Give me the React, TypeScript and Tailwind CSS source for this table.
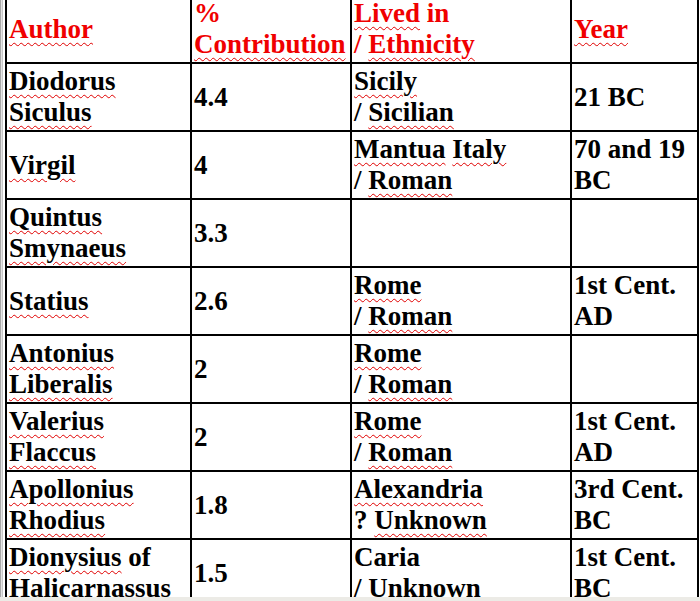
const header = [
  ["~Author~"],
  ["%", "~Contribution~"],
  ["~Lived~ in", "/ ~Ethnicity~"],
  ["~Year~"],
];

const rows = [
  [["~Diodorus~", "~Siculus~"], ["4.4"], ["~Sicily~", "/ ~Sicilian~"], ["21 BC"]],
  [["~Virgil~"], ["4"], ["~Mantua~ ~Italy~", "/ ~Roman~"], ["70 and 19", "BC"]],
  [["~Quintus~", "~Smynaeus~"], ["3.3"], [], []],
  [["~Statius~"], ["2.6"], ["~Rome~", "/ ~Roman~"], ["1st Cent.", "AD"]],
  [["~Antonius~", "~Liberalis~"], ["2"], ["~Rome~", "/ ~Roman~"], []],
  [["~Valerius~", "~Flaccus~"], ["2"], ["~Rome~", "/ ~Roman~"], ["1st Cent.", "AD"]],
  [["~Apollonius~", "~Rhodius~"], ["1.8"], ["~Alexandria~", "? ~Unknown~"], ["3rd Cent.", "BC"]],
  [["~Dionysius~ of", "~Halicarnassus~"], ["1.5"], ["Caria", "/ ~Unknown~"], ["1st Cent.", "BC"]],
];

// words between ~ get the spell-check squiggle
const Line = ({ text }: { text: string }) => (
  <span className="block whitespace-nowrap">
    {text.split("~").map((part, i) =>
      i % 2 === 1 ? (
        <span
          key={i}
          className="underline decoration-wavy decoration-[#e00000] decoration-1 underline-offset-[4px]"
        >
          {part}
        </span>
      ) : (
        <span key={i}>{part}</span>
      )
    )}
  </span>
);

const Cell = ({ lines, head }: { lines: string[]; head?: boolean }) => (
  <div
    className={`flex h-[68px] items-center border-r-2 border-b-2 border-black pl-[2px] ${
      head ? "text-[#f00000]" : "text-black"
    }`}
  >
    <div>
      {lines.map((l, i) => (
        <Line key={i} text={l} />
      ))}
    </div>
  </div>
);

export default function App() {
  return (
    <div className="flex h-[601px] w-[700px] flex-col overflow-hidden bg-white">
      <div className="flex h-[597px] overflow-hidden">
        <div className="w-px shrink-0 bg-[#a8a8a8]" />
        <div className="w-px shrink-0 bg-[#e4e4e4]" />
        <div className="w-px shrink-0 bg-[#c8c8c8]" />
        <div className="pl-[2px]">
          <div
            className="-mt-[6px] grid grid-cols-[185px_160px_220px_127px] border-t-2 border-l-2 border-black text-[27px] leading-[31px] font-bold"
            style={{ fontFamily: '"Liberation Serif", "Times New Roman", serif' }}
          >
            {header.map((h, i) => (
              <Cell key={i} lines={h} head />
            ))}
            {rows.map((r, ri) =>
              r.map((c, ci) => <Cell key={`${ri}-${ci}`} lines={c} />)
            )}
          </div>
        </div>
      </div>
      <div className="h-[4px] bg-[#ecebe6]" />
    </div>
  );
}
